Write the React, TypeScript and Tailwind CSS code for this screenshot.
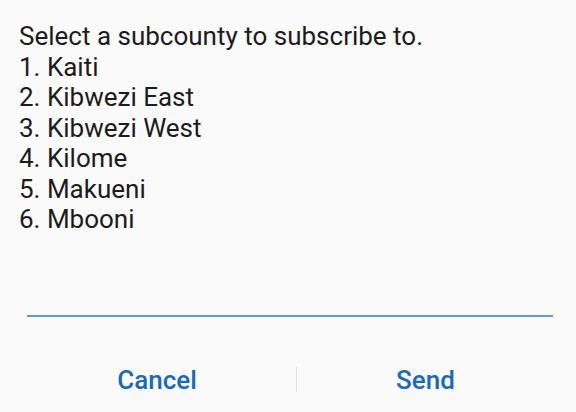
export default function App() {
  const lines = [
    "Select a subcounty to subscribe to.",
    "1. Kaiti",
    "2. Kibwezi East",
    "3. Kibwezi West",
    "4. Kilome",
    "5. Makueni",
    "6. Mbooni",
  ];
  return (
    <div className="w-[576px] h-[412px] bg-[#fafafa] flex flex-col" style={{ fontFamily: "Roboto, sans-serif" }}>
      <div className="pt-[21px] pl-[19px] text-[26px] leading-[30.5px] text-[#1c1c1c]">
        {lines.map((l) => (
          <div key={l}>{l}</div>
        ))}
      </div>
      <div className="mt-[80px] ml-[27px] mr-[23px] h-[2px] bg-[#5a9bd3]" />
      <div className="mt-[48px] pl-[18px] flex items-center">
        <div className="w-[278px] text-center text-[26px] leading-[30px] font-medium text-[#1b6ab8]">Cancel</div>
        <div className="w-px h-[25px] bg-[#e4e4e4]" />
        <div className="w-[257px] text-center text-[26px] leading-[30px] font-medium text-[#1b6ab8]">Send</div>
      </div>
    </div>
  );
}
